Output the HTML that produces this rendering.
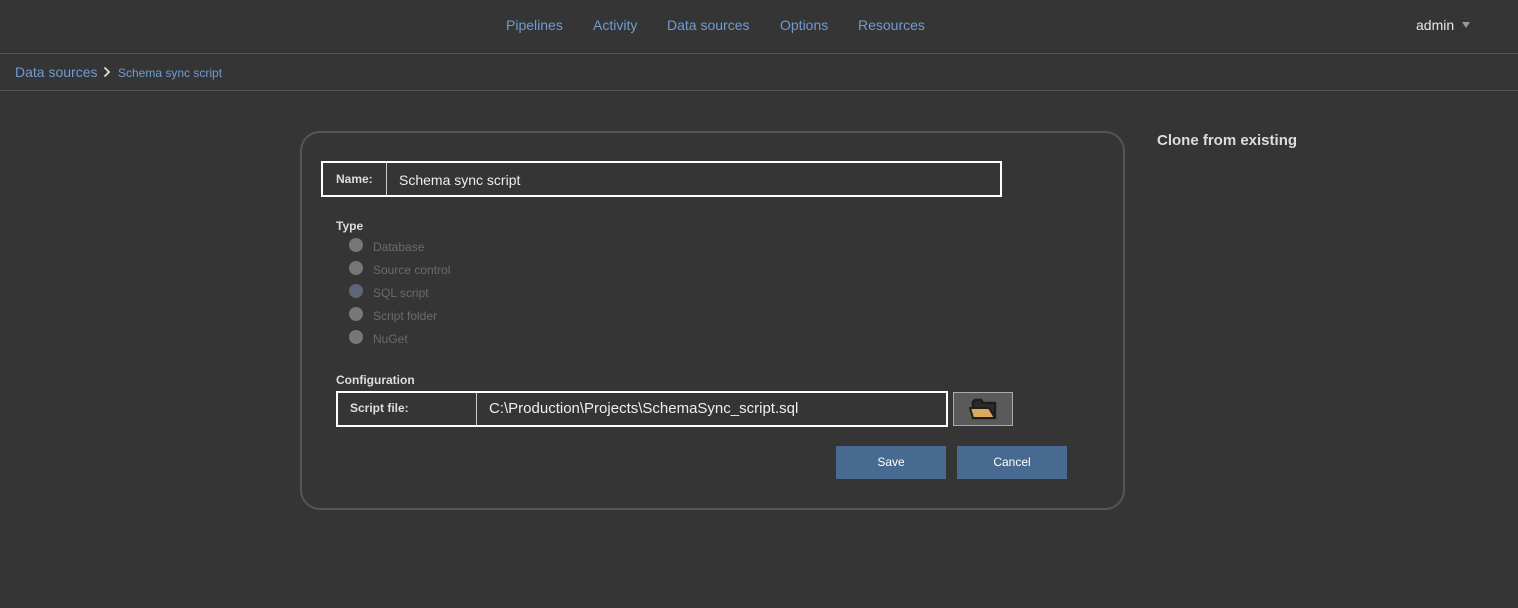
<!DOCTYPE html>
<html><head><style>
*{margin:0;padding:0;box-sizing:border-box}
body{width:1518px;height:608px;background:#353535;font-family:"Liberation Sans",Arial,sans-serif;position:relative;overflow:hidden}
.a{position:absolute}
.nav{color:#6f9bd1;font-size:14px;top:17px}
.radio{position:absolute;left:349px;width:14px;height:14px;border-radius:50%;background:#777}
.rl{position:absolute;left:373px;font-size:12px;color:#6b6b6b}
.btn{position:absolute;top:446px;width:110px;height:33px;background:#486a90;color:#fff;font-size:12px;text-align:center;line-height:33px}
</style></head><body>
<div class="a nav" style="left:506px">Pipelines</div>
<div class="a nav" style="left:593px">Activity</div>
<div class="a nav" style="left:667px">Data sources</div>
<div class="a nav" style="left:780px">Options</div>
<div class="a nav" style="left:858px">Resources</div>
<div class="a" style="left:1416px;top:17px;font-size:14px;color:#e8e8e8">admin</div>
<div class="a" style="left:1462px;top:22px;width:0;height:0;border-left:4px solid transparent;border-right:4px solid transparent;border-top:6px solid #999"></div>
<div class="a" style="left:0;top:53px;width:1518px;height:1px;background:#555"></div>
<div class="a" style="left:15px;top:64px;font-size:14px;color:#6f9bd1">Data sources</div>
<svg class="a" style="left:103px;top:66px" width="8" height="12"><path d="M1.5 1.5 L6 6 L1.5 10.5" stroke="#e0e0e0" stroke-width="1.8" fill="none"/></svg>
<div class="a" style="left:118px;top:66px;font-size:12px;color:#6f9bd1">Schema sync script</div>
<div class="a" style="left:0;top:90px;width:1518px;height:1px;background:#555"></div>

<div class="a" style="left:300px;top:131px;width:825px;height:379px;border:2px solid #555;border-radius:20px"></div>
<div class="a" style="left:321px;top:161px;width:681px;height:36px;border:2px solid #fff"></div>
<div class="a" style="left:386px;top:163px;width:1px;height:32px;background:#ccc"></div>
<div class="a" style="left:336px;top:172px;font-size:12px;font-weight:bold;color:#ddd">Name:</div>
<div class="a" style="left:399px;top:172px;font-size:14px;color:#eee">Schema sync script</div>

<div class="a" style="left:336px;top:219px;font-size:12px;font-weight:bold;color:#ddd">Type</div>
<div class="radio" style="top:238px"></div><div class="rl" style="top:240px">Database</div>
<div class="radio" style="top:261px"></div><div class="rl" style="top:263px">Source control</div>
<div class="radio" style="top:284px;background:#5c6678"></div><div class="rl" style="top:286px">SQL script</div>
<div class="radio" style="top:307px"></div><div class="rl" style="top:309px">Script folder</div>
<div class="radio" style="top:330px"></div><div class="rl" style="top:332px">NuGet</div>

<div class="a" style="left:336px;top:373px;font-size:12px;font-weight:bold;color:#ddd">Configuration</div>
<div class="a" style="left:336px;top:391px;width:612px;height:36px;border:2px solid #fff"></div>
<div class="a" style="left:476px;top:393px;width:1px;height:32px;background:#ccc"></div>
<div class="a" style="left:350px;top:401px;font-size:12px;font-weight:bold;color:#ddd">Script file:</div>
<div class="a" style="left:489px;top:400px;font-size:15px;color:#eee">C:\Production\Projects\SchemaSync_script.sql</div>
<div class="a" style="left:953px;top:392px;width:60px;height:34px;background:#5a5a5a;border:1px solid #aaa"></div>
<svg class="a" style="left:968px;top:398px" width="30" height="24"><path d="M5 4 L5 20 L27 20 L27 5 L15 5 L13 2 L7 2 Z" fill="#2b2b2b" stroke="#1e1e1e" stroke-width="2.5" stroke-linejoin="round"/><path d="M2 10 L21 10 L27 20 L5 20 Z" fill="#d9a95d" stroke="#1e1e1e" stroke-width="2" stroke-linejoin="round"/></svg>

<div class="btn" style="left:836px">Save</div>
<div class="btn" style="left:957px">Cancel</div>

<div class="a" style="left:1157px;top:132px;font-size:15px;font-weight:bold;color:#ddd">Clone from existing</div>
</body></html>
